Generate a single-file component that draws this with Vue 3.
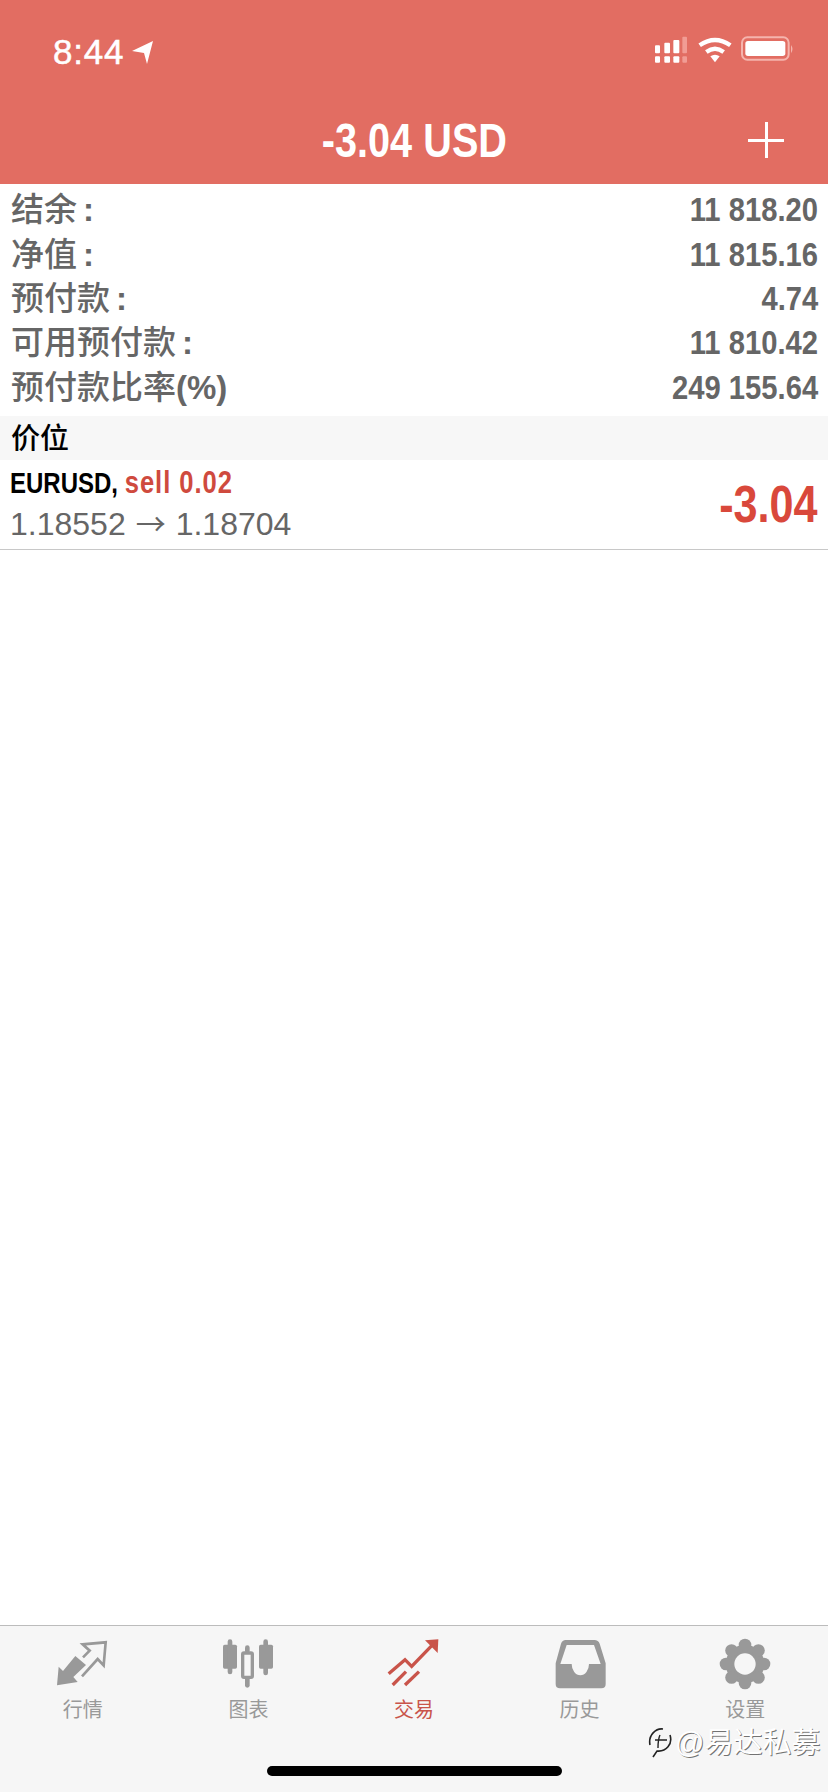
<template>
  <div class="page">
    <header class="top">
      <div class="status">
        <div class="clock">
          <span>8:44</span>
          <svg class="loc" viewBox="0 0 22 23" width="22" height="23"><path d="M21 0 0 10l12 2 3 11z" fill="#fff" /></svg>
        </div>
        <svg class="indicators" viewBox="0 0 510 120" width="170" height="40">
          <g fill="#fff">
            <rect x="45" y="46" width="15" height="24" rx="3" />
            <rect x="73" y="38" width="17" height="32" rx="3" />
            <rect x="100" y="30" width="18" height="40" rx="3" />
            <rect x="45" y="79" width="15" height="19" rx="3" />
            <rect x="73" y="79" width="17" height="19" rx="3" />
            <rect x="100" y="79" width="18" height="19" rx="3" />
          </g>
          <g fill="#f19c94">
            <rect x="127" y="20" width="14" height="50" rx="3" />
            <rect x="127" y="79" width="14" height="19" rx="3" />
          </g>
          <g fill="none" stroke="#fff" stroke-width="13">
            <path d="M179 46Q225 14 271 46" />
            <path d="M199 66Q225 47 251 66" />
          </g>
          <path d="M211 79Q225 70 239 79L225 97z" fill="#fff" />
          <rect x="306" y="22" width="140" height="67" rx="16" fill="none" stroke="#f5b4ad" stroke-width="6" />
          <rect x="316" y="33" width="120" height="45" rx="8" fill="#fff" />
          <path d="M453 45q9 12 0 25z" fill="#f5b4ad" />
        </svg>
      </div>
      <div class="titlebar">
        <span></span>
        <h1 class="title">-3.04 USD</h1>
        <button class="plus" aria-label="add"></button>
      </div>
    </header>

    <main class="content">
      <section class="summary">
        <div v-for="row in summary" :key="row.label" class="row">
          <span class="label">{{ row.label }}<i class="suffix" :class="{ colon: row.suffix === ':' }">{{ row.suffix }}</i></span>
          <span class="amount">{{ row.value }}</span>
        </div>
      </section>
      <div class="section-head">价位</div>
      <div class="position">
        <div class="pos-left">
          <div class="pos-name"><b>EURUSD,</b> <b class="red">sell 0.02</b></div>
          <div class="pos-prices">1.18552<span class="arrow">→</span>1.18704</div>
        </div>
        <div class="pos-profit">-3.04</div>
      </div>
    </main>

    <nav class="tabs">
      <div v-for="tab in tabs" :key="tab.id" class="tab" :class="{ active: tab.id === 'trade' }">
        <svg v-if="tab.id === 'quotes'" class="tab-icon" viewBox="38 18 180 162">
          <path d="M50 166 55 110 68 123 105 78 137 105 99 141 112 156z" fill="#999" />
          <path d="M128 82 148 62 127 43 196 37 190 106 172 87 125 139" fill="none" stroke="#999" stroke-width="8" />
        </svg>
        <svg v-else-if="tab.id === 'chart'" class="tab-icon" viewBox="655 78 180 162">
          <g fill="#999">
            <rect x="670" y="104" width="42" height="72" rx="5" />
            <rect x="684" y="88" width="14" height="105" rx="7" />
            <rect x="778" y="104" width="42" height="72" rx="5" />
            <rect x="791" y="88" width="14" height="108" rx="7" />
            <rect x="736" y="106" width="14" height="24" rx="7" />
            <rect x="736" y="200" width="14" height="33" rx="7" />
          </g>
          <rect x="729" y="129" width="29" height="73" rx="4" fill="none" stroke="#999" stroke-width="10" />
        </svg>
        <svg v-else-if="tab.id === 'trade'" class="tab-icon" viewBox="42 18 180 162">
          <g fill="none" stroke="#c9544a" stroke-width="10">
            <path d="M56 131 105 89 125 109 186 46" />
            <path d="M68 165 108 125" />
            <path d="M105 165 147 125" />
          </g>
          <path d="M165 31 205 28 203 69z" fill="#c9544a" />
        </svg>
        <svg v-else-if="tab.id === 'history'" class="tab-icon" viewBox="400 78 180 162">
          <path fill-rule="evenodd" fill="#999" d="M447 90H533Q545 90 549 101L567 160V222Q567 235 554 235H430Q417 235 417 222V160L433 101Q437 90 447 90ZM450 105 431 162H465A26 34 0 0 0 517 162H552L532 105Z" />
        </svg>
        <svg v-else class="tab-icon" viewBox="900 78 180 162">
          <g fill="#999">
            <circle cx="990" cy="162" r="58" />
            <circle v-for="lobe in gearLobes" :key="lobe.x" :cx="lobe.x" :cy="lobe.y" r="19" />
          </g>
          <circle cx="990" cy="162" r="32" fill="#f6f6f6" />
        </svg>
        <span class="tab-label">{{ tab.label }}</span>
      </div>

      <div class="home-bar"></div>
      <div class="watermark">
        <svg viewBox="0 0 26 34" width="26" height="34">
          <path d="M3 19C1 9 9 2 16 3M23 9c3 9-4 17-13 16l-4 6" fill="none" stroke="#222" stroke-width="1.6" />
          <path d="M8 14h12M13 9c-2 4-2 9-2 13" fill="none" stroke="#222" stroke-width="1.4" />
        </svg>
        <span>@易达私募</span>
      </div>
    </nav>
  </div>
</template>

<script setup>
const summary = [
  { label: '结余', suffix: ':', value: '11 818.20' },
  { label: '净值', suffix: ':', value: '11 815.16' },
  { label: '预付款', suffix: ':', value: '4.74' },
  { label: '可用预付款', suffix: ':', value: '11 810.42' },
  { label: '预付款比率', suffix: '(%)', value: '249 155.64' },
]

const tabs = [
  { id: 'quotes', label: '行情' },
  { id: 'chart', label: '图表' },
  { id: 'trade', label: '交易' },
  { id: 'history', label: '历史' },
  { id: 'settings', label: '设置' },
]

// Eight bumps around the settings gear
const gearLobes = Array.from({ length: 8 }, (_, i) => {
  const a = (i * Math.PI) / 4
  return { x: 990 + 57 * Math.cos(a), y: 162 + 57 * Math.sin(a) }
})
</script>

<style>
body {
  background: #fff;
}
</style>

<style scoped>
.page {
  position: relative;
  display: flex;
  flex-direction: column;
  width: 828px;
  height: 1792px;
  overflow: hidden;
  background: #fff;
  font-family: "Liberation Sans", "Noto Sans CJK SC", sans-serif;
}

.top {
  height: 184px;
  flex: none;
  background: #e26d62;
  color: #fff;
}

.status {
  display: flex;
  justify-content: space-between;
  padding: 30px 18px 0 53px;
  height: 40px;
}

.clock {
  display: flex;
  align-items: flex-start;
  gap: 8px;
  padding-top: 3px;
  font-size: 35px;
  line-height: 38px;
  letter-spacing: 0.8px;
  -webkit-text-stroke: 0.5px #fff;
}

.loc {
  margin-top: 8px;
}

.titlebar {
  display: grid;
  grid-template-columns: 1fr auto 1fr;
  align-items: center;
  margin-top: 47px;
  height: 46px;
}

.title {
  margin: 0;
  font-size: 49px;
  line-height: 46px;
  font-weight: 700;
  transform: scaleX(0.81);
}

.plus {
  position: relative;
  justify-self: end;
  width: 36px;
  height: 36px;
  margin-right: 44px;
  padding: 0;
  border: 0;
  background: linear-gradient(#fff, #fff) center / 3px 100% no-repeat,
    linear-gradient(#fff, #fff) center / 100% 3px no-repeat;
}

.content {
  flex: 1;
}

.summary {
  padding: 4px 10px 6px 11px;
}

.row {
  display: flex;
  justify-content: space-between;
  align-items: center;
  height: 44.4px;
  color: #666;
}

.label {
  font-size: 33px;
  font-weight: 500;
  line-height: 44px;
}

.suffix {
  font-style: normal;
  font-weight: 700;
}

.colon {
  margin-left: 6px;
}

.amount {
  font-size: 33px;
  font-weight: 700;
  transform: scaleX(0.885);
  transform-origin: right center;
}

.section-head {
  height: 44px;
  padding-left: 11px;
  background: #f7f7f7;
  color: #000;
  font-size: 29px;
  font-weight: 500;
  line-height: 46px;
}

.position {
  display: flex;
  justify-content: space-between;
  align-items: center;
  height: 90px;
  padding: 0 10px;
  border-bottom: 1px solid #c8c8c8;
  box-sizing: border-box;
}

.pos-left {
  margin-bottom: 3px;
}

.pos-name {
  font-size: 30px;
  line-height: 40px;
  transform: scaleX(0.8);
  transform-origin: left center;
  white-space: nowrap;
  color: #000;
}

.red {
  color: #cf4a3e;
  font-size: 32px;
  letter-spacing: 1.2px;
}

.pos-prices {
  font-size: 32px;
  line-height: 38px;
  color: #666;
}

.arrow {
  margin: 0 10px;
  font-family: "Noto Sans CJK SC", sans-serif;
  font-size: 30px;
}

.pos-profit {
  font-size: 52px;
  font-weight: 700;
  color: #d9483b;
  transform: scaleX(0.83);
  transform-origin: right center;
}

.tabs {
  position: relative;
  display: grid;
  grid-template-columns: repeat(5, 1fr);
  height: 167px;
  flex: none;
  box-sizing: border-box;
  border-top: 1px solid #bcbcbc;
  background: #f6f6f6;
}

.tab {
  display: flex;
  flex-direction: column;
  align-items: center;
  padding-top: 10px;
  color: #999;
}

.tab.active {
  color: #c9544a;
}

.tab-icon {
  width: 60px;
  height: 54px;
}

.tab-label {
  margin-top: 8px;
  font-size: 20px;
  line-height: 24px;
}

.home-bar {
  position: absolute;
  left: 267px;
  bottom: 16px;
  width: 295px;
  height: 10px;
  border-radius: 5px;
  background: #000;
}

.watermark {
  position: absolute;
  left: 647px;
  top: 100px;
  display: flex;
  align-items: center;
  gap: 2px;
  color: #fff;
  font-size: 29px;
  line-height: 34px;
  text-shadow: 1px 1px 0 rgba(0, 0, 0, 0.55);
  white-space: nowrap;
}
</style>
